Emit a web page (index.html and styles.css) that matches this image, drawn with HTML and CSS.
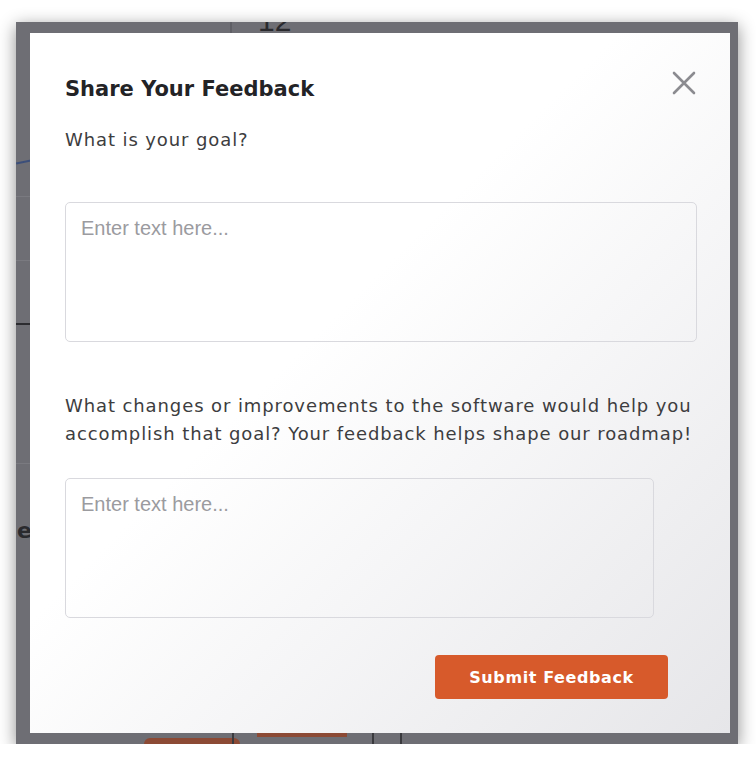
FILE: index.html
```html
<!DOCTYPE html>
<html lang="en">
<head>
    <meta charset="UTF-8">
    <meta name="viewport" content="width=device-width, initial-scale=1.0">
    <title>Share Your Feedback</title>
    <link rel="stylesheet" href="styles.css">
</head>
<body>

<div class="frame">
    <!-- app behind the overlay, mostly hidden -->
    <div class="behind">
        <span class="bg-num">12</span>
        <span class="bg-vline v1"></span>
        <span class="bg-blue"></span>
        <span class="bg-hline h1"></span>
        <span class="bg-hline h2"></span>
        <span class="bg-hline h3"></span>
        <span class="bg-hline h4"></span>
        <span class="bg-letter">e</span>
        <span class="bg-orange o1"></span>
        <span class="bg-orange o2"></span>
        <span class="bg-vline v2"></span>
        <span class="bg-vline v3"></span>
        <span class="bg-vline v4"></span>
    </div>

    <section class="modal">
        <button class="close-btn" aria-label="Close">
            <svg width="24" height="24" viewBox="0 0 24 24">
                <path d="M2 2 L22 22 M22 2 L2 22" stroke="#8b8b90" stroke-width="2.6" stroke-linecap="round"/>
            </svg>
        </button>
        <h2 class="modal-title">Share Your Feedback</h2>
        <form class="feedback-form" onsubmit="return false">
            <label class="question q-goal" for="goal">What is your goal?</label>
            <textarea id="goal" class="answer answer-wide" placeholder="Enter text here..."></textarea>
            <label class="question q-changes" for="changes">What changes or improvements to the software would help you accomplish that goal? Your feedback helps shape our roadmap!</label>
            <textarea id="changes" class="answer answer-narrow" placeholder="Enter text here..."></textarea>
            <div class="actions">
                <button type="submit" class="btn-submit">Submit Feedback</button>
            </div>
        </form>
    </section>
</div>

</body>
</html>
```

FILE: styles.css
```css
body { margin: 0; background-color: #fff; font-family: "DejaVu Sans", "Open Sans", sans-serif; }

.frame { position: relative; margin: 22px 0 0 16px; width: 722px; height: 722px; padding: 11px 8px 11px 14px; box-sizing: border-box; background-color: #6e6e74; box-shadow: 0 4px 16px rgba(0, 0, 0, 0.45); }

.behind { position: absolute; top: 0; left: 0; right: 0; bottom: 0; overflow: hidden; }
.behind span { position: absolute; display: block; }
.bg-num { left: 242px; top: -16px; font-size: 30px; color: #2a2a2e; line-height: 1; font-family: "Liberation Sans", sans-serif; }
.bg-vline { width: 2px; background-color: #3a3a3e; }
.v1 { left: 214px; top: 0; height: 11px; background-color: #5f5f65; }
.v2 { left: 216px; bottom: 0; height: 11px; }
.v3 { left: 356px; bottom: 0; height: 11px; }
.v4 { left: 384px; bottom: 0; height: 11px; }
.bg-blue { left: 0; top: 139px; width: 15px; height: 2px; background-color: #3c4f7a; transform: rotate(-12deg); }
.bg-hline { left: 0; width: 14px; height: 1px; background-color: #7a7a80; }
.h1 { top: 174px; }
.h2 { top: 238px; }
.h3 { top: 301px; height: 2px; background-color: #2c2c30; }
.h4 { top: 441px; }
.bg-letter { left: 1px; top: 496px; font-size: 22px; font-weight: 700; color: #2a2a2e; }
.bg-orange { height: 4px; background-color: #8c4a35; }
.o1 { left: 128px; bottom: 0; width: 96px; height: 6px; border-radius: 6px 6px 0 0; }
.o2 { left: 241px; bottom: 7px; width: 90px; }

.modal { position: relative; width: 700px; height: 700px; box-sizing: border-box; padding: 44px 34px 0 35px; background: linear-gradient(135deg, #ffffff 42%, #e6e6e9 100%); }

.close-btn { position: absolute; top: 38px; right: 34px; padding: 0; border: none; background: none; cursor: pointer; line-height: 0; }

.modal-title { margin: 0 0 25px; font-size: 21px; font-weight: 700; color: #232326; }

.feedback-form { display: flex; flex-direction: column; align-items: flex-start; }

.question { display: block; font-size: 18px; line-height: 28px; color: #3d3d40; letter-spacing: 0.9px; }
.q-goal { margin-bottom: 48px; }
.q-changes { margin-top: 50px; margin-bottom: 30px; }

.answer { display: block; box-sizing: border-box; height: 140px; padding: 14px 15px; border: 1px solid #d9d9de; border-radius: 5px; background: transparent; resize: none; font-family: "Liberation Sans", sans-serif; font-size: 20px; color: #333; }
.answer::placeholder { color: #9b9b9f; }
.answer-wide { width: 632px; }
.answer-narrow { width: 589px; }

.actions { align-self: stretch; display: flex; justify-content: flex-end; margin-top: 37px; padding-right: 28px; }
.btn-submit { width: 233px; height: 44px; border: none; border-radius: 4px; background-color: #d75a2b; color: #fff; font-family: inherit; font-size: 16px; font-weight: 600; letter-spacing: 0.6px; cursor: pointer; }
```
